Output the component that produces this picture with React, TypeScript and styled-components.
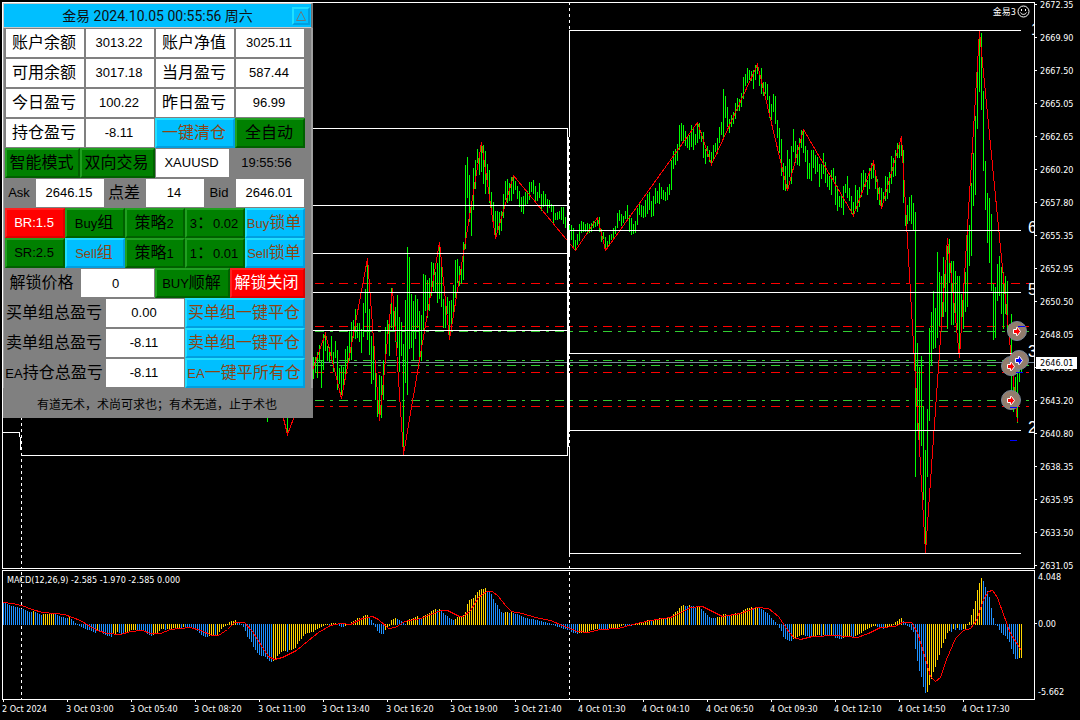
import React from "react";
import styled, { createGlobalStyle, css } from "styled-components";

const GlobalStyle = createGlobalStyle`
  * { box-sizing: border-box; }
  body { margin: 0; background: #000; }
`;

const axisFont = css`
  font-family: "DejaVu Sans Condensed", "Noto Sans CJK SC", sans-serif;
  font-size: 9px;
  line-height: 12px;
  color: #fff;
  white-space: nowrap;
`;

/* ---------- page frame ---------- */

const Terminal = styled.main`
  display: grid;
  grid-template-columns: minmax(0, 1fr) 45px;
  grid-template-rows: minmax(567px, 1fr) 130px 19px;
  row-gap: 1px;
  min-height: 100vh;
  padding: 2px 0 0 2px;
  background: #000;
  overflow: hidden;
  ${axisFont}
`;

const Pane = styled.section`
  position: relative;
  border: 1px solid #fff;
  min-width: 0;
  overflow: hidden;
`;

const Plot = styled.svg`
  position: absolute;
  inset: 0;
  width: 100%;
  height: 100%;
  shape-rendering: crispEdges;
`;

const PriceScale = styled.div`
  position: relative;
  display: flex;
  flex-direction: column;
  justify-content: space-between;
  padding: 2px 0 3px;
`;

const ScaleMark = styled.div<{ $gap?: number; $tick?: string }>`
  display: flex;
  align-items: center;
  gap: ${(p) => p.$gap ?? 3}px;
  height: 1px;
  &::before {
    content: "";
    width: 2px;
    height: 1px;
    background: ${(p) => p.$tick ?? "#fff"};
  }
`;

const CurrentPrice = styled.output`
  position: absolute;
  top: 355px;
  left: 1px;
  width: 41px;
  height: 12px;
  padding-left: 4px;
  background: #fff;
  color: #000;
`;

const MacdScale = styled.div`
  display: grid;
  grid-template-rows: 47fr 68fr 1px;
  padding: 6px 0 7px;
`;

const TimeScale = styled.div`
  display: grid;
  grid-template-columns: repeat(16, 1fr);
  padding: 0 8px 0 1px;
  margin-top: -1px;
`;

const TimeMark = styled.time`
  min-width: 0;
  line-height: 14px;
  margin-left: -1px;
  &::before {
    content: "";
    display: block;
    width: 1px;
    height: 2px;
    margin-left: 1px;
    background: #fff;
  }
`;

const ExpertName = styled.div`
  position: absolute;
  top: 2px;
  right: 4px;
  display: flex;
  align-items: center;
  gap: 1px;
`;

const IndicatorName = styled.h2`
  position: absolute;
  top: 3px;
  left: 4px;
  margin: 0;
  font: inherit;
`;

/* ---------- control panel ---------- */

const Panel = styled.aside`
  position: absolute;
  top: 0;
  left: 0;
  width: 310px;
  background: #808080;
  font-family: "Liberation Sans", "Noto Sans CJK SC", sans-serif;
  font-size: 13px;
  line-height: 16px;
  color: #000;
`;

const PanelHeader = styled.header`
  display: grid;
  grid-template-columns: 1fr auto 1fr;
  align-items: center;
  width: 309px;
  height: 25px;
  padding: 0 1px;
  border: 1px solid #c8c8c8;
  border-right-color: #707070;
  background: #00bfff;
`;

const PanelTitle = styled.h1`
  grid-column: 2;
  margin: 0;
  font-family: Roboto, "Noto Sans CJK SC", sans-serif;
  font-size: 14px;
  font-weight: 400;
  line-height: 20px;
  color: #101010;
`;

type Tone = "green" | "blue" | "red";

const tones = {
  green: { face: "#008000", light: "#20a020", dark: "#006000" },
  blue: { face: "#00bfff", light: "#20dfff", dark: "#009fdf" },
  red: { face: "#ff0000", light: "#ff2020", dark: "#df0000" },
};

const bevel = (tone: Tone) => css`
  background: ${tones[tone].face};
  border: 2px solid;
  border-color: ${tones[tone].light} ${tones[tone].dark} ${tones[tone].dark} ${tones[tone].light};
`;

const FoldButton = styled.button`
  justify-self: end;
  display: grid;
  place-items: center;
  width: 18px;
  height: 18px;
  padding: 0;
  ${bevel("blue")}
`;

const PanelBody = styled.div`
  padding: 0 6px 0 1px;
  border-left: 1px solid #a0a0a0;
  border-right: 2px solid #a0a0a0;
`;

const Row = styled.div`
  display: flex;
  height: 30px;
`;

const cell = css<{ $w: number }>`
  display: flex;
  align-items: center;
  justify-content: center;
  width: ${(p) => p.$w}px;
  flex: none;
  padding: 0 2px 0 0;
  white-space: nowrap;
`;

const Name = styled.span<{ $w: number }>`
  ${cell}
`;

const FieldName = styled.label<{ $w: number }>`
  ${cell}
`;

const paper = css`
  height: 28px;
  border: 0;
  background: #fff;
  color: #000;
`;

const Value = styled.output<{ $w: number }>`
  ${cell}
  ${paper}
  width: ${(p) => p.$w - 2}px;
  margin: 1px;
`;

const PriceInput = styled.input<{ $w: number }>`
  ${paper}
  width: ${(p) => p.$w - 2}px;
  margin: 1px;
  padding: 0 4px 0 0;
  font: inherit;
  text-align: center;
`;

const Action = styled.button<{ $w: number; $tone: Tone }>`
  ${cell}
  ${(p) => bevel(p.$tone)}
  height: 30px;
  font: inherit;
  color: ${(p) => (p.$tone === "blue" ? "#8b4513" : p.$tone === "red" ? "#fff" : "#000")};
`;

const Han = styled.span`
  font-size: 16px;
  line-height: 16px;
`;

const Motto = styled.p`
  margin: 0;
  padding: 0 2px 0 0;
  height: 30px;
  font-family: "Noto Sans CJK SC", sans-serif;
  font-size: 12px;
  line-height: 32px;
  text-align: center;
  color: #000;
`;

/* Chinese characters are set larger than the Latin letters beside them. */
const Mixed = ({ children }: { children: string }) => (
  <span>
    {children
      .split(/([\u3000-\uffff]+)/)
      .filter(Boolean)
      .map((part, i) => (/[\u3000-\uffff]/.test(part) ? <Han key={i}>{part}</Han> : part))}
  </span>
);

/* ---------- data ---------- */

const prices = [
  "2672.35", "2669.90", "2667.50", "2665.05", "2662.65", "2660.20", "2657.80", "2655.35", "2652.95",
  "2650.50", "2648.05", "2645.65", "2643.20", "2640.80", "2638.35", "2635.95", "2633.50", "2631.05",
];

const times = [
  "2 Oct 2024", "3 Oct 03:00", "3 Oct 05:40", "3 Oct 08:20", "3 Oct 11:00", "3 Oct 13:40",
  "3 Oct 16:20", "3 Oct 19:00", "3 Oct 21:40", "4 Oct 01:30", "4 Oct 04:10", "4 Oct 06:50",
  "4 Oct 09:30", "4 Oct 12:10", "4 Oct 14:50", "4 Oct 17:30",
];

/* High-low bars, one every two units from FIRST_BAR on. */
const FIRST_BAR = 313;
const bars = `
357-379 357-373 352-378 345-362 361-388 334-370 336-351 346-361 347-362 336-360
352-372 341-358 350-390 368-384 366-395 367-385 349-375 346-365 331-361 322-360
320-338 309-339 323-338 323-342 329-353 303-337 289-313 265-340 309-355 336-384
346-380 373-400 399-417 375-414 376-418 360-400 327-359 320-340 314-356 288-328
297-331 307-342 295-348 317-372 322-356 344-447 300-383 247-395 257-349 294-348
301-360 295-339 299-328 311-358 315-361 274-330 275-311 280-318 278-311 262-296
263-291 272-292 263-303 247-299 267-307 299-328 306-328 297-314 301-335 300-331
285-312 260-298 259-283 266-286 262-284 242-280 165-249 157-198 175-222 207-236
168-210 160-189 149-163 158-175 146-172 145-184 151-194 164-187 170-203 192-215
202-228 211-237 211-233 212-235 211-231 194-218 181-200 179-203 183-201 177-201
176-194 181-190 186-199 191-207 197-212 196-214 192-205 191-204 182-200 182-192
180-194 186-203 192-201 183-198 194-211 191-207 194-205 199-213 200-208 204-212
206-223 213-220 212-220 211-219 207-220 207-224 217-228 222-230 225-230 225-240
228-247 240-250 234-245 224-241 221-233 222-232 224-232 223-234 224-233 223-232
221-228 222-227 219-226 217-232 229-242 232-239 237-248 241-249 235-244 234-240
228-239 226-234 213-228 210-221 214-226 216-223 211-219 205-219 215-232 218-235
224-234 221-233 208-225 204-215 205-217 206-218 200-217 194-214 192-210 201-217
196-216 188-204 191-203 183-204 187-199 190-200 192-201 187-200 184-195 160-190
151-169 149-165 144-161 125-150 123-141 125-141 131-146 136-148 135-150 125-147
129-150 134-145 124-143 123-139 132-142 132-158 149-164 146-157 150-162 152-163
145-159 143-152 138-154 127-143 122-135 89-137 96-118 107-127 119-133 115-127
112-124 103-119 98-111 99-111 93-107 77-99 74-86 68-83 70-80 71-81
70-89 65-80 66-74 71-86 68-94 82-96 82-94 84-100 96-118 104-120
94-112 96-124 120-138 128-153 139-176 163-190 166-191 150-190 159-177 146-184
129-152 141-163 145-165 138-166 130-148 130-153 146-162 150-179 163-179 150-181
150-168 155-174 157-172 164-187 164-179 153-174 162-183 174-187 176-190 170-195
168-182 176-205 186-211 196-207 196-208 186-215 184-193 176-198 188-201 196-214
202-215 185-210 190-212 187-207 173-197 170-187 173-187 180-195 168-189 163-179
163-178 170-189 179-200 187-205 188-208 192-201 176-201 177-199 172-193 156-184
158-177 150-176 143-158 142-158 145-156 150-203 215-226 205-224 197-221 195-224
203-230 212-477 343-430 367-441 356-446 406-500 450-545 409-477 328-421 312-365
291-349 308-348 252-338 272-326 276-326 257-317 260-312 246-329 239-283 261-325
261-325 271-319 276-330 276-353 294-322 300-329 272-312 235-307 225-266 183-256
153-206 116-195 71-129 39-92 33-110 91-171 161-210 193-243 198-263 214-291
284-340 287-338 264-301 256-296 267-314 272-329 276-314 281-332 324-345 314-400
358-412 377-407 363-423 363-382 360-372`
  .trim()
  .split(/\s+/)
  .map((bar) => bar.split("-").map(Number));

const zigzag =
  "283,418 287,434 293,418 313,367 325,333 341,398 367,258 379,420 392,288 403,454 439,242 449,339 481,142 " +
  "495,238 513,175 575,250 597,217 605,250 697,122 711,164 757,64 787,190 803,129 853,215 873,161 881,208 " +
  "901,136 925,552 947,238 959,357 979,31 1017,422";

/* MACD histogram heights, one every two units from x = 3. */
const macd = `
21 21 20 19 18 18 17 17 16 15 15 14 13 12 12 13 12 11 10 9 10 10 10 11 11 11 10 9 8 7 7 6 6 7 5 3 1 0 -1 -2
-3 -4 -5 -5 -6 -7 -8 -6 -7 -7 -9 -10 -11 -11 -12 -9 -9 -7 -8 -9 -9 -7 -7 -6 -5 -5 -5 -6 -6 -6 -6 -7 -9 -10 -11 -10 -9 -8 -6 -4
-4 -5 -4 -4 -4 -3 -3 -3 -3 -4 -2 -3 -3 -3 -3 -3 -4 -6 -8 -10 -11 -12 -12 -11 -10 -10 -11 -10 -7 -4 -2 -1 0 2 3 3 4 2 1 0
-2 -6 -12 -14 -17 -22 -25 -28 -30 -31 -31 -32 -34 -36 -37 -36 -34 -31 -29 -27 -26 -26 -27 -25 -25 -24 -23 -19 -16 -14 -11 -9 -8 -8 -7 -7 -5 -4 -3 -2
-1 0 0 -1 1 1 1 0 -1 -2 -2 -1 0 0 2 3 4 6 6 6 8 9 9 7 4 1 -2 -6 -8 -9 -9 -5 -3 -1 4 5 6 5 4 3
1 0 4 5 5 6 7 8 6 6 8 9 10 11 13 14 15 14 15 14 11 9 8 6 5 4 5 7 8 8 9 12 20 24 25 26 29 32 34 35
35 36 33 33 30 25 21 19 15 12 11 12 12 11 12 11 10 10 9 8 7 6 6 5 5 5 4 4 3 3 2 2 1 1 0 0 -1 -2 -2 -3
-4 -4 -5 -5 -7 -8 -8 -9 -8 -8 -8 -7 -7 -6 -5 -5 -4 -4 -5 -5 -5 -5 -5 -4 -4 -4 -4 -3 -2 -1 0 -1 -1 -1 -1 0 0 0 2 2
2 3 4 4 3 4 4 5 6 6 6 5 6 6 8 10 12 13 16 18 19 18 18 19 18 18 16 17 17 15 13 11 9 7 6 6 6 7 7 7
10 10 9 9 10 10 11 11 11 12 14 15 16 16 17 16 17 17 16 15 14 12 11 9 6 4 2 0 -3 -6 -12 -14 -15 -16 -16 -14 -13 -12 -11 -10
-10 -11 -11 -12 -12 -11 -11 -10 -10 -11 -10 -11 -11 -11 -10 -11 -13 -13 -14 -14 -13 -12 -11 -11 -12 -12 -11 -10 -9 -8 -6 -5 -4 -3 -2 -1 -1 -2 -3 -3
-4 -3 -2 -1 -1 0 2 3 5 6 3 1 -1 -2 -5 -7 -24 -36 -46 -52 -62 -68 -67 -60 -54 -47 -42 -35 -30 -23 -18 -14 -8 -6 -7 -4 -5 -3 -5 -5
-4 -4 0 2 9 15 23 34 41 46 43 37 33 27 16 6 0 -1 -5 -8 -10 -11 -14 -17 -24 -29 -34 -34 -33 -33`
  .trim()
  .split(/\s+/)
  .map(Number);

const signal =
  "3,602 12,603 21,605 32,609 42,612 55,613 64,614 72,617 80,620 88,625 97,630 107,633 120,634 130,631 142,630 " +
  "150,633 160,633 170,629 190,627 200,630 212,635 218,635 227,629 234,622 244,622 252,631 262,647 268,656 " +
  "274,659 282,657 296,650 308,640 318,632 330,625 340,623 350,624 362,618 372,616 378,619 388,628 395,627 " +
  "404,621 420,618 430,614 441,610 447,610 459,616 463,616 470,610 478,597 486,591 492,591 498,596 505,605 " +
  "511,611 522,613 535,617 550,620 562,625 577,631 587,632 600,629 618,628 632,624 650,620 670,617 683,611 " +
  "690,607 702,606 710,610 722,616 740,613 756,607 768,608 778,616 786,628 793,637 800,639 812,636 835,635 " +
  "857,637 868,633 880,627 895,626 902,622 911,622 917,632 924,655 930,676 935,681 940,677 946,659 955,638 " +
  "963,630 970,628 976,620 983,599 988,591 992,590 997,597 1003,614 1010,633 1021,650";

const barPath = bars
  .map(([high, low], i) => `M${FIRST_BAR + 2 * i} ${high}h1V${low}h-1z`)
  .join("");

/* A rising histogram bar is gold, a falling one blue; an equal one keeps its neighbour's colour. */
const ZERO = 624;
const histogram = macd.reduce(
  (acc, value, i) => {
    const prev = macd[i - 1] ?? value;
    const rising = value === prev ? acc.rising : value > prev;
    const x = 3 + 2 * i;
    const piece =
      value > 0 ? `M${x} ${ZERO - value}h1V${ZERO + 1}h-1z` : `M${x} ${ZERO}h1v${1 - value}h-1z`;
    return {
      rising,
      gold: acc.gold + (rising ? piece : ""),
      blue: acc.blue + (rising ? "" : piece),
    };
  },
  { rising: false, gold: "", blue: "" }
);

/* ---------- chart pieces ---------- */

const H = ({ y, from, to }: { y: number; from: number; to: number }) => (
  <rect x={from} y={y} width={to - from} height={1} fill="#fff" />
);

const V = ({ x, from, to }: { x: number; from: number; to: number }) => (
  <rect x={x} y={from} width={1} height={to - from} fill="#fff" />
);

const Level = ({ y, color }: { y: number; color: string }) => (
  <path d={`M3 ${y + 0.5}H1029`} stroke={color} strokeDasharray="9 6 3 6" fill="none" />
);

const DaySeparator = ({ x, from, to }: { x: number; from: number; to: number }) => (
  <path d={`M${x + 0.5} ${from}V${to}`} stroke="#fff" strokeDasharray="3 3" fill="none" />
);

const trades = [
  { x: 1017, y: 331, color: "#ff0000" },
  { x: 1011, y: 366, color: "#ff0000" },
  { x: 1019, y: 360, color: "#0000ff" },
  { x: 1011, y: 400, color: "#ff0000" },
];

/* The discs come first so that no disc hides a neighbour's arrow. */
const Trades = () => (
  <g shapeRendering="auto">
    {trades.map((t) => (
      <circle key={`${t.x} ${t.y}`} cx={t.x} cy={t.y} r="9.5" fill="#927d6d" stroke="#778899" />
    ))}
    {trades.map((t) => (
      <path
        key={`${t.x} ${t.y}`}
        transform={`translate(${t.x} ${t.y})`}
        d="M-3.5 -1.5H-0.5V-3.5H0.5L3.5 0.5L0.5 4.5H-0.5V2.5H-3.5Z"
        fill={t.color}
        stroke="#fff"
      />
    ))}
  </g>
);

const fiboLabels = [
  { text: "1", x: 1031, y: 35 },
  { text: "6", x: 1028, y: 233 },
  { text: "5", x: 1028, y: 295 },
  { text: "3", x: 1028, y: 357 },
  { text: "2", x: 1028, y: 433 },
];

const PriceChart = () => (
  <Plot viewBox="3 3 1031 565" preserveAspectRatio="none" role="img" aria-label="XAUUSD">
    <DaySeparator x={21} from={3} to={568} />
    <DaySeparator x={569} from={2} to={568} />
    {[283, 326, 372, 406].map((y) => (
      <Level key={y} y={y} color="#ff0000" />
    ))}
    {[331, 360, 365, 400].map((y) => (
      <Level key={y} y={y} color="#32cd32" />
    ))}
    <path d="M3 362.5H1034" stroke="#778899" />
    <path d={barPath} fill="#00ff00" />
    <path d="M267 418h1v4h-1zM287 418h1v14h-1z" fill="#00ff00" />
    <polyline points={zigzag} fill="none" stroke="#ff0000" transform="translate(0.5 0.5)" />
    <H y={432} from={3} to={20} />
    <V x={19} from={432} to={437} />
    <V x={20} from={437} to={450} />
    <H y={455} from={21} to={568} />
    {[128, 205, 253, 330].map((y) => (
      <H key={y} y={y} from={21} to={568} />
    ))}
    <V x={567} from={128} to={455} />
    <V x={568} from={137} to={447} />
    <H y={292} from={21} to={1021} />
    {[30, 230, 353, 430, 553].map((y) => (
      <H key={y} y={y} from={569} to={1021} />
    ))}
    <V x={569} from={30} to={137} />
    <V x={569} from={230} to={257} />
    <V x={569} from={326} to={353} />
    <V x={569} from={373} to={432} />
    <V x={569} from={447} to={553} />
    {fiboLabels.map((l) => (
      <text key={l.text} x={l.x} y={l.y} fill="#fff" fontFamily="Liberation Sans, sans-serif" fontSize="16">
        {l.text}
      </text>
    ))}
    <Trades />
    <path d="M1018 326h7v1h-7zM1016 372h7v1h-7zM1010 407h7v1h-7zM1010 440h7v1h-7z" fill="#0000ff" />
  </Plot>
);

const MacdChart = () => (
  <Plot viewBox="3 571 1031 128" preserveAspectRatio="none" role="img" aria-label="MACD">
    <DaySeparator x={21} from={572} to={699} />
    <DaySeparator x={569} from={572} to={699} />
    <path d={histogram.blue} fill="#1e90ff" />
    <path d={histogram.gold} fill="#ffd700" />
    <polyline points={signal} fill="none" stroke="#ff0000" transform="translate(0.5 0.5)" />
  </Plot>
);

/* ---------- panel ---------- */

const accountRows = [
  ["账户余额", "3013.22", "账户净值", "3025.11"],
  ["可用余额", "3017.18", "当月盈亏", "587.44"],
  ["今日盈亏", "100.22", "昨日盈亏", "96.99"],
];

const strategyRows: [string, Tone][][] = [
  [["BR:1.5", "red"], ["Buy组", "green"], ["策略2", "green"], ["3：0.02", "green"], ["Buy锁单", "blue"]],
  [["SR:2.5", "green"], ["Sell组", "blue"], ["策略1", "green"], ["1：0.01", "green"], ["Sell锁单", "blue"]],
];

const totals = [
  ["买单组总盈亏", "0.00", "买单组一键平仓"],
  ["卖单组总盈亏", "-8.11", "卖单组一键平仓"],
  ["EA持仓总盈亏", "-8.11", "EA一键平所有仓"],
];

const Press = ({ w, tone, children }: { w: number; tone: Tone; children: string }) => (
  <Action type="button" $w={w} $tone={tone}>
    <Mixed>{children}</Mixed>
  </Action>
);

const ControlPanel = () => (
  <Panel>
    <PanelHeader>
      <PanelTitle>金易 2024.10.05 00:55:56 周六</PanelTitle>
      <FoldButton type="button" aria-label="收起">
        <svg width="12" height="12" viewBox="0 0 12 12">
          <path d="M6 1.5L10.5 10.5H1.5Z" fill="none" stroke="#667a80" />
        </svg>
      </FoldButton>
    </PanelHeader>
    <PanelBody>
      {accountRows.map(([a, av, b, bv]) => (
        <Row key={a}>
          <Value as="span" $w={80}><Mixed>{a}</Mixed></Value>
          <Value $w={70}>{av}</Value>
          <Value as="span" $w={80}><Mixed>{b}</Mixed></Value>
          <Value $w={70}>{bv}</Value>
        </Row>
      ))}
      <Row>
        <Value as="span" $w={80}><Mixed>持仓盈亏</Mixed></Value>
        <Value $w={70}>-8.11</Value>
        <Press w={80} tone="blue">一键清仓</Press>
        <Press w={70} tone="green">全自动</Press>
      </Row>
      <Row>
        <Press w={75} tone="green">智能模式</Press>
        <Press w={75} tone="green">双向交易</Press>
        <Value $w={75}>XAUUSD</Value>
        <Name $w={75}>19:55:56</Name>
      </Row>
      <Row>
        <Name $w={30}>Ask</Name>
        <Value $w={70}>2646.15</Value>
        <Name $w={40}><Mixed>点差</Mixed></Name>
        <Value $w={60}>14</Value>
        <Name $w={30}>Bid</Name>
        <Value $w={70}>2646.01</Value>
      </Row>
      {strategyRows.map((row, i) => (
        <Row key={i}>
          {row.map(([text, tone]) => (
            <Press key={text} w={60} tone={tone}>{text}</Press>
          ))}
        </Row>
      ))}
      <Row>
        <FieldName $w={75} htmlFor="unlock-price"><Mixed>解锁价格</Mixed></FieldName>
        <PriceInput $w={75} id="unlock-price" defaultValue="0" />
        <Press w={75} tone="green">BUY顺解</Press>
        <Press w={75} tone="red">解锁关闭</Press>
      </Row>
      {totals.map(([name, value, action]) => (
        <Row key={name}>
          <Name $w={100}><Mixed>{name}</Mixed></Name>
          <Value $w={80}>{value}</Value>
          <Press w={120} tone="blue">{action}</Press>
        </Row>
      ))}
    </PanelBody>
    <Motto>有道无术，术尚可求也；有术无道，止于术也</Motto>
  </Panel>
);

const Smiley = () => (
  <svg width="13" height="13" viewBox="0 0 13 13" fill="none" stroke="#fff">
    <circle cx="6.5" cy="6.5" r="5.5" />
    <path d="M3.5 7.5C4.5 10 8.5 10 9.5 7.5" />
    <path d="M4 4h1v2h-1zM8 4h1v2h-1z" fill="#fff" stroke="none" />
  </svg>
);

export default function App() {
  return (
    <>
      <GlobalStyle />
      <Terminal>
        <Pane>
          <PriceChart />
          <ExpertName>
            金易3
            <Smiley />
          </ExpertName>
          <ControlPanel />
        </Pane>
        <PriceScale>
          {prices.map((p) => (
            <ScaleMark key={p}>{p}</ScaleMark>
          ))}
          <CurrentPrice>2646.01</CurrentPrice>
        </PriceScale>
        <Pane>
          <MacdChart />
          <IndicatorName>MACD(12,26,9) -2.585 -1.970 -2.585 0.000</IndicatorName>
        </Pane>
        <MacdScale>
          <ScaleMark $gap={1} $tick="none">4.048</ScaleMark>
          <ScaleMark $gap={1}>0.00</ScaleMark>
          <ScaleMark $gap={1} $tick="none">-5.662</ScaleMark>
        </MacdScale>
        <TimeScale>
          {times.map((t) => (
            <TimeMark key={t}>{t}</TimeMark>
          ))}
        </TimeScale>
      </Terminal>
    </>
  );
}
